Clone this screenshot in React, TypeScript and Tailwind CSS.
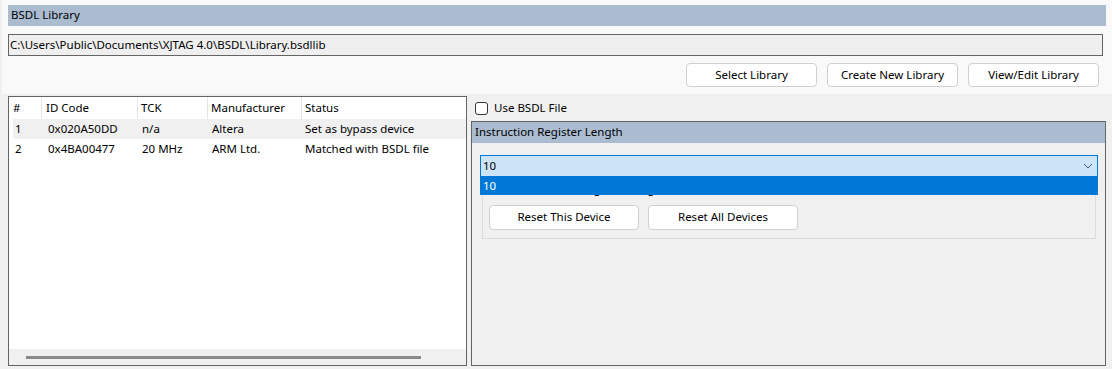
import React from "react";

const font = { fontFamily: '"Noto Sans", "Liberation Sans", sans-serif' };

function Btn({ label, w }: { label: string; w: string }) {
  return (
    <div
      className={`${w} h-full flex items-center justify-center bg-white border border-[#d0d0d0] rounded-[4px] text-black pb-[1px]`}
    >
      {label}
    </div>
  );
}

const cols = [
  { label: "#", w: "w-[32px]", pl: "pl-[3px]" },
  { label: "ID Code", w: "w-[96px]", pl: "pl-[4px]" },
  { label: "TCK", w: "w-[70px]", pl: "pl-[3px]" },
  { label: "Manufacturer", w: "w-[94px]", pl: "pl-[3px]" },
  { label: "Status", w: "flex-1", pl: "pl-[3px]" },
];

const rows = [
  ["1", "0x020A50DD", "n/a", "Altera", "Set as bypass device"],
  ["2", "0x4BA00477", "20 MHz", "ARM Ltd.", "Matched with BSDL file"],
];

export default function App() {
  return (
    <div
      className="w-[1112px] h-[369px] bg-[#f0f0f0] text-[11.5px] leading-none text-black flex flex-col overflow-hidden"
      style={font}
    >
      {/* Top section */}
      <div className="h-[94px] bg-[#f9f9f9] pt-[5px] pl-[8px] flex flex-col border-l-2 border-[#f0f0f0]">
        <div className="w-[1098px] h-[21px] bg-[#abbcd1] flex items-center pl-[3px] pb-[1px] -ml-[2px]">
          BSDL Library
        </div>
        <div className="mt-[8px] w-[1095px] h-[22px] border border-[#646464] bg-[#efefef] flex items-center pl-[1px] pb-[1px] -ml-[2px]">
          C:\Users\Public\Documents\XJTAG 4.0\BSDL\Library.bsdllib
        </div>
        <div className="mt-[7px] h-[24px] flex gap-[10px] pl-[676px]">
          <Btn label="Select Library" w="w-[131px]" />
          <Btn label="Create New Library" w="w-[131px]" />
          <Btn label="View/Edit Library" w="w-[131px]" />
        </div>
      </div>

      {/* Lower section */}
      <div className="flex pt-[2px] pl-[8px] gap-[4px] h-[272px]">
        {/* Device list */}
        <div className="w-[459px] h-[270px] border border-[#646464] bg-white flex flex-col">
          <div className="h-[22px] flex items-center pl-[1px]">
            {cols.map((c, i) => (
              <div
                key={c.label}
                className={`${c.w} ${c.pl} h-full flex items-center pb-[1px] ${
                  i < cols.length - 1 ? "border-r border-[#e5e5e5]" : ""
                }`}
              >
                {c.label}
              </div>
            ))}
          </div>
          <div className="flex flex-col pl-[4px]">
            {rows.map((r, ri) => (
              <div
                key={ri}
                className={`h-[20px] flex items-center pb-[1px] ${ri === 0 ? "bg-[#f0f0f0]" : ""}`}
              >
                <div className="w-[29px] pl-[2px]">{r[0]}</div>
                <div className="w-[96px] pl-[6px]">{r[1]}</div>
                <div className="w-[70px] pl-[4px]">{r[2]}</div>
                <div className="w-[94px] pl-[4px]">{r[3]}</div>
                <div className="flex-1 pl-[3px]">{r[4]}</div>
              </div>
            ))}
          </div>
          <div className="flex-1" />
          <div className="h-[16px] bg-[#f0f0f0] flex items-center pl-[17px]">
            <div className="w-[395px] h-[3px] bg-[#8a8a8a]" />
          </div>
        </div>

        {/* Right side */}
        <div className="w-[635px] flex flex-col">
          <div className="h-[25px] flex items-center pl-[4px] gap-[6px]">
            <div className="w-[13px] h-[13px] border border-[#333] rounded-[3px] bg-white" />
            <span className="pb-[1px]">Use BSDL File</span>
          </div>
          <div className="h-[245px] border border-[#646464] flex flex-col">
            <div className="h-[21px] bg-[#abbcd1] flex items-center pl-[3px] pb-[1px]">
              Instruction Register Length
            </div>
            <div className="relative pt-[12px] pl-[8px] pr-[7px]">
              <div className="h-[22px] bg-[#cce4f7] border border-[#0078d7] flex items-center pl-[2px] justify-between pr-[4px]">
                <span className="pb-[1px]">10</span>
                <svg width="10" height="6" viewBox="0 0 10 6" fill="none">
                  <path d="M1 1 L5 5 L9 1" stroke="#555" strokeWidth="1" />
                </svg>
              </div>
              <div className="mx-[2px] h-[58px] border border-[#dcdcdc] flex flex-col mt-[4px]">
                <div className="h-[22px] flex items-center pl-[35px] -mt-[4px]">
                  Instruction Register Length
                </div>
                <div className="mt-[5px] h-[25px] flex gap-[9px] pl-[6px]">
                  <Btn label="Reset This Device" w="w-[150px]" />
                  <Btn label="Reset All Devices" w="w-[150px]" />
                </div>
              </div>
              <div className="absolute left-[8px] right-[7px] top-[34px] h-[18px] bg-[#0078d7] text-white flex items-center pl-[3px] pb-[1px]">
                10
              </div>
            </div>
          </div>
        </div>
      </div>
    </div>
  );
}
